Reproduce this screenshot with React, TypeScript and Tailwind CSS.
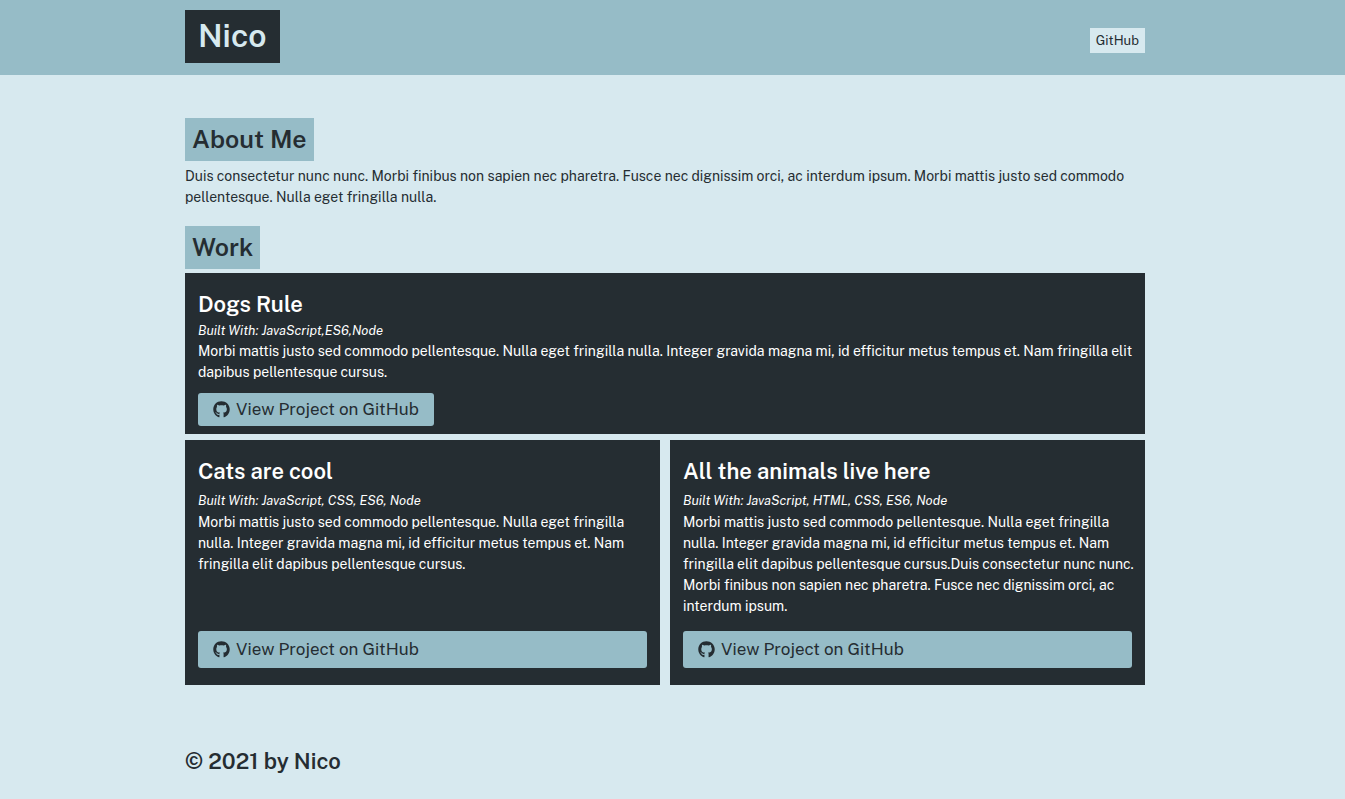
import React from "react";
import { FaGithub } from "react-icons/fa";

type Project = {
  title: string;
  builtWith: string;
  text: string;
};

const featured: Project = {
  title: "Dogs Rule",
  builtWith: "JavaScript,ES6,Node",
  text: "Morbi mattis justo sed commodo pellentesque. Nulla eget fringilla nulla. Integer gravida magna mi, id efficitur metus tempus et. Nam fringilla elit dapibus pellentesque cursus.",
};

const projects: Project[] = [
  {
    title: "Cats are cool",
    builtWith: "JavaScript, CSS, ES6, Node",
    text: "Morbi mattis justo sed commodo pellentesque. Nulla eget fringilla nulla. Integer gravida magna mi, id efficitur metus tempus et. Nam fringilla elit dapibus pellentesque cursus.",
  },
  {
    title: "All the animals live here",
    builtWith: "JavaScript, HTML, CSS, ES6, Node",
    text: "Morbi mattis justo sed commodo pellentesque. Nulla eget fringilla nulla. Integer gravida magna mi, id efficitur metus tempus et. Nam fringilla elit dapibus pellentesque cursus.Duis consectetur nunc nunc. Morbi finibus non sapien nec pharetra. Fusce nec dignissim orci, ac interdum ipsum.",
  },
];

function SectionTitle({ children }: { children: React.ReactNode }) {
  return (
    <h2 className="w-fit bg-[#96bcc7] px-[7px] pb-px text-[25px] leading-[42px] font-semibold">
      {children}
    </h2>
  );
}

export default function App() {
  return (
    <div className="min-h-screen bg-[#d7e9ef] font-['Public_Sans','Inter',sans-serif] text-sm text-[#252d32]">
      <header className="bg-[#96bcc7] pr-[15px]">
        <div className="mx-auto flex max-w-[960px] items-start justify-between pt-[10px] pb-3">
          <h1 className="bg-[#252d32] px-[13px] pb-px text-[32px] leading-[52px] font-semibold text-[#d7e9ef]">
            Nico
          </h1>
          <nav className="pt-[18px]">
            <a href="#github" className="block bg-[#d7e9ef] px-[6px] text-[13px] leading-[25px]">
              GitHub
            </a>
          </nav>
        </div>
      </header>

      <div className="pr-[15px]">
        <main className="mx-auto max-w-[960px] pt-[43px]">
          <section>
            <SectionTitle>About Me</SectionTitle>
            <p className="mt-[5px] leading-[21px]">
              Duis consectetur nunc nunc. Morbi finibus non sapien nec pharetra. Fusce nec dignissim
              orci, ac interdum ipsum. Morbi mattis justo sed commodo pellentesque. Nulla eget
              fringilla nulla.
            </p>
          </section>

          <section className="mt-[18px]">
            <SectionTitle>Work</SectionTitle>
            <article className="mt-1 bg-[#252d32] px-[13px] pt-[13px] pb-2 text-white">
              <h3 className="text-[22px] leading-9 font-semibold">{featured.title}</h3>
              <p className="text-[13px] leading-[18px] italic">Built With: {featured.builtWith}</p>
              <p className="-mr-2 mt-px leading-[21px]">{featured.text}</p>
              <a
                href="#dogs-rule"
                className="mt-[10px] flex w-fit items-center gap-[6px] rounded-[3px] bg-[#96bcc7] px-[15px] text-[17px] leading-[33px] text-[#252d32]"
              >
                <FaGithub className="size-[17px]" aria-hidden="true" />
                View Project on GitHub
              </a>
            </article>

            <div className="mt-[6px] grid grid-cols-2 gap-[10px]">
              {projects.map((project) => (
                <article
                  key={project.title}
                  className="flex flex-col bg-[#252d32] px-[13px] pt-[13px] pb-[17px] text-white"
                >
                  <h3 className="text-[22px] leading-9 font-semibold">{project.title}</h3>
                  <p className="mt-[3px] text-[13px] leading-[18px] italic">
                    Built With: {project.builtWith}
                  </p>
                  <p className="-mr-2 mt-[2px] mb-[14px] leading-[21px]">{project.text}</p>
                  <a
                    href="#project"
                    className="mt-auto flex items-center gap-[6px] rounded-[3px] bg-[#96bcc7] px-[15px] text-[17px] leading-[37px] text-[#252d32]"
                  >
                    <FaGithub className="size-[17px]" aria-hidden="true" />
                    View Project on GitHub
                  </a>
                </article>
              ))}
            </div>
          </section>
        </main>

        <footer className="mx-auto max-w-[960px] pt-[58px] pb-5">
          <h2 className="text-[22px] leading-9 font-semibold">© 2021 by Nico</h2>
        </footer>
      </div>
    </div>
  );
}
